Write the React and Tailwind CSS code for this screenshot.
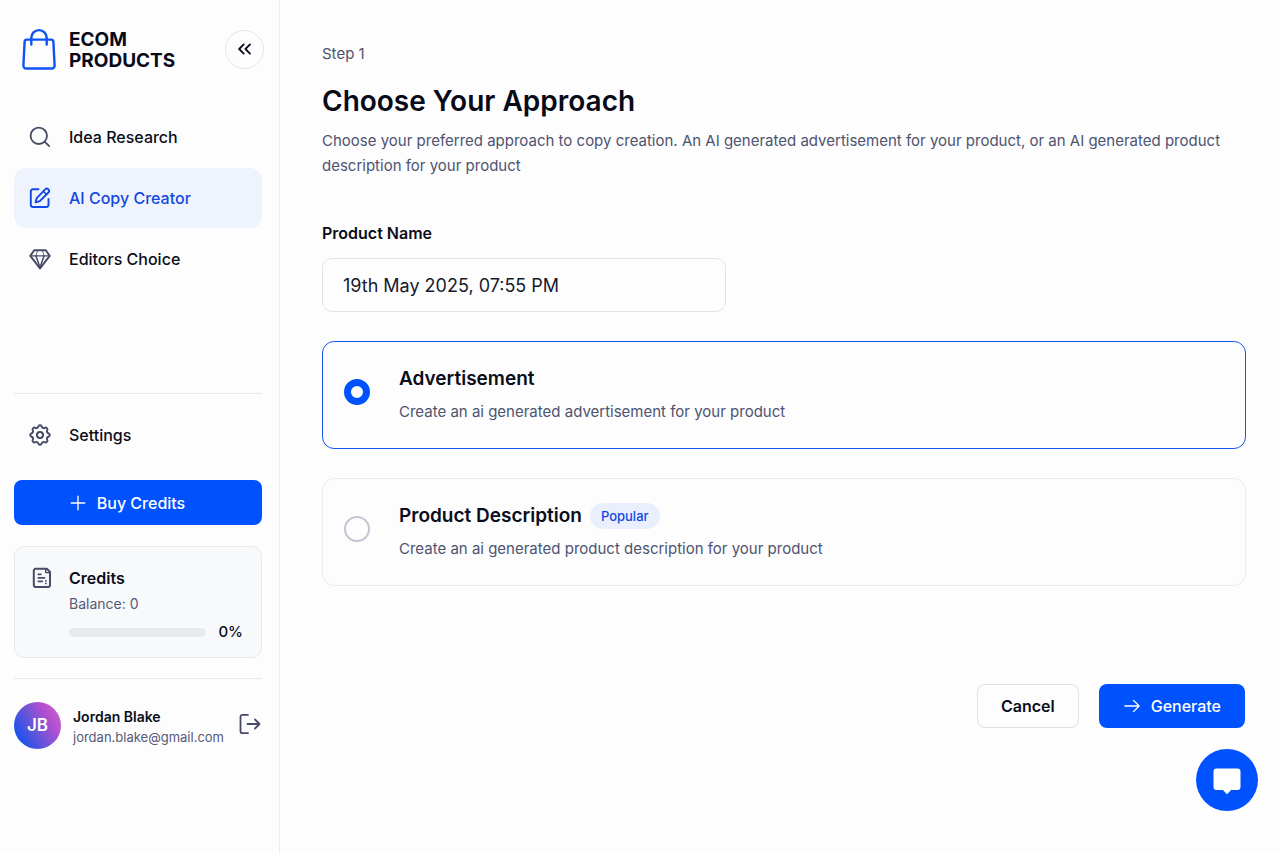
import { useState } from "react";

function Icon({ className = "size-6", width = 1.8, children }) {
  return (
    <svg
      viewBox="0 0 24 24"
      fill="none"
      stroke="currentColor"
      strokeWidth={width}
      strokeLinecap="round"
      strokeLinejoin="round"
      className={`shrink-0 ${className}`}
      aria-hidden="true"
    >
      {children}
    </svg>
  );
}

function BagLogo() {
  return (
    <svg viewBox="0 0 34 42" fill="none" stroke="#0f52f5" strokeWidth="2.4" strokeLinecap="round" strokeLinejoin="round" className="h-[42px] w-[34px] shrink-0" aria-hidden="true">
      <path d="M5 11.6h24a2.4 2.4 0 0 1 2.4 2.3l1.2 23.6a2.8 2.8 0 0 1-2.8 3H4.2a2.8 2.8 0 0 1-2.8-3l1.2-23.6A2.4 2.4 0 0 1 5 11.6z" />
      <path d="M9.3 16.6V9.8a7.7 7.7 0 0 1 15.4 0v6.8" />
    </svg>
  );
}

function SearchIcon() {
  return (
    <Icon>
      <circle cx="10.8" cy="10.8" r="8.2" />
      <path d="M16.8 16.8 21.2 21.2" />
    </Icon>
  );
}

function EditIcon() {
  return (
    <Icon width={1.9}>
      <path d="M10.5 3.3H5A2.2 2.2 0 0 0 2.8 5.5v13.3A2.2 2.2 0 0 0 5 21h13.3a2.2 2.2 0 0 0 2.2-2.2V13" />
      <path d="M17.2 3.3a2.2 2.2 0 0 1 3.2 3.2l-8.6 8.7-4.2 1.1 1.1-4.2z" />
      <path d="m15.3 5.3 3.1 3.1" strokeWidth="1.5" />
    </Icon>
  );
}

function DiamondIcon() {
  return (
    <Icon width={2}>
      <path d="M6.2 3.2h11.6l3.9 5.6L12 21.4 2.3 8.8z" />
      <path d="M2.6 8.9h18.8" strokeWidth="1.3" />
      <path d="M8 8.9 12 20.6 16 8.9" strokeWidth="1.5" />
      <path d="m9.5 3.5-1.5 5.4M14.5 3.5 16 8.9" strokeWidth="0.8" />
    </Icon>
  );
}

function GearIcon() {
  return (
    <Icon className="size-[26px] -mx-px">
      <path d="M10.325 4.317c.426-1.756 2.924-1.756 3.35 0a1.724 1.724 0 0 0 2.573 1.066c1.543-.94 3.31.826 2.37 2.37a1.724 1.724 0 0 0 1.065 2.572c1.756.426 1.756 2.924 0 3.35a1.724 1.724 0 0 0-1.066 2.573c.94 1.543-.826 3.31-2.37 2.37a1.724 1.724 0 0 0-2.572 1.065c-.426 1.756-2.924 1.756-3.35 0a1.724 1.724 0 0 0-2.573-1.066c-1.543.94-3.31-.826-2.37-2.37a1.724 1.724 0 0 0-1.065-2.572c-1.756-.426-1.756-2.924 0-3.35a1.724 1.724 0 0 0 1.066-2.573c-.94-1.543.826-3.31 2.37-2.37.996.608 2.296.07 2.572-1.065z" />
      <circle cx="12" cy="12" r="2.8" />
    </Icon>
  );
}

function ReceiptIcon() {
  return (
    <Icon width={2}>
      <path d="M5.8 2.8h11l3.2 3.2v13a2 2 0 0 1-2 2H5.8a2 2 0 0 1-2-2V4.8a2 2 0 0 1 2-2z" />
      <path d="M15.7 3.2v3.4h4" strokeWidth="1.4" />
      <path d="M8.3 8.3h2.6M8.3 11.8h6.2M8.3 15.3h4" strokeWidth="1.7" />
      <path d="M15.9 14.8v.1M15.9 17.3v.1" strokeWidth="1.7" />
    </Icon>
  );
}

function NavItem({ icon, label, active }) {
  return (
    <a
      href="#"
      aria-current={active ? "page" : undefined}
      className={`flex h-[60px] items-center gap-[17px] rounded-xl pl-[14px] text-[16px] font-medium ${
        active ? "bg-[#eff3fe] text-[#1249e0]" : "text-[#0b0d1a]"
      }`}
    >
      <span className={`flex ${active ? "" : "text-[#474b66]"}`}>{icon}</span>
      {label}
    </a>
  );
}

function Sidebar() {
  return (
    <aside className="flex w-[280px] shrink-0 flex-col border-r border-[#ebecf0] pt-[27px] pr-[17px] pl-[14px]">
      <div className="flex items-center pl-2">
        <BagLogo />
        <p className="ml-[13px] pt-0.5 text-[19px] leading-[21px] font-bold text-[#080a18]">
          ECOM
          <br />
          PRODUCTS
        </p>
        <button type="button" aria-label="Collapse sidebar" className="-mr-0.5 ml-auto flex size-[39px] items-center justify-center rounded-full border border-[#e4e5ea] text-[#0b0d1a]">
          <Icon className="size-5" width={2.2}>
            <path d="m10.500 17.500-5.500-5.500 5.500-5.500M18 17.500 12.500 12 18 6.500" />
          </Icon>
        </button>
      </div>

      <nav className="mt-9 flex flex-col gap-px">
        <NavItem icon={<SearchIcon />} label="Idea Research" />
        <NavItem icon={<EditIcon />} label="AI Copy Creator" active />
        <NavItem icon={<DiamondIcon />} label="Editors Choice" />
      </nav>

      <div className="mt-[104px] border-t border-[#e8e9ed] pt-[11px]">
        <NavItem icon={<GearIcon />} label="Settings" />
      </div>

      <button type="button" className="mt-[15px] flex h-[45px] items-center justify-center gap-2.5 rounded-lg bg-[#0052ff] pr-[22px] text-[16px] font-medium text-white">
        <Icon className="size-[18px]" width={1.8}>
          <path d="M12 3v18M3 12h18" />
        </Icon>
        Buy Credits
      </button>

      <section className="mt-[21px] flex gap-[15px] rounded-[10px] border border-[#e6e8ec] bg-[#f8f9fb] pt-[19px] pr-[18px] pb-[14px] pl-[15px]">
        <span className="text-[#474b66]">
          <ReceiptIcon />
        </span>
        <div className="grow">
          <h2 className="text-[16px] leading-6 font-semibold text-[#0b0d1a]">Credits</h2>
          <p className="mt-[3px] text-[14px] leading-[22px] text-[#555a78]">Balance: 0</p>
          <div className="mt-1.5 flex items-center gap-3">
            <div role="progressbar" aria-label="Credits used" aria-valuenow={0} aria-valuemin={0} aria-valuemax={100} className="h-[9px] grow rounded-full bg-[#e9eaef]" />
            <span className="text-[15px] leading-[22px] font-medium text-[#0b0d1a]">0%</span>
          </div>
        </div>
      </section>

      <div className="mt-5 flex items-center border-t border-[#e8e9ed] pt-[23px]">
        <span className="flex size-[47px] shrink-0 items-center justify-center rounded-full bg-[linear-gradient(60deg,#1150f0_10%,#6a55d8_45%,#b04fd0_70%,#d062c8_95%)] text-[17px] font-semibold text-white">
          JB
        </span>
        <div className="mt-[3px] ml-3 min-w-0">
          <p className="text-[14px] leading-5 font-semibold text-[#0b0d1a]">Jordan Blake</p>
          <p className="text-[13px] leading-5 text-[#555a78]">jordan.blake@gmail.com</p>
        </div>
        <button type="button" aria-label="Log out" className="mb-[3px] ml-auto text-[#474b66]">
          <Icon>
            <path d="M10 2.8H4.500a2 2 0 0 0-2 2v14.400a2 2 0 0 0 2 2H10" />
            <path d="M9.500 12h12M17 7.500l4.500 4.500-4.500 4.500" />
          </Icon>
        </button>
      </div>
    </aside>
  );
}

function Option({ value, title, text, badge, selected, onSelect }) {
  return (
    <label
      className={`flex cursor-pointer items-start rounded-xl border pt-[23px] pr-6 pb-6 pl-[21px] ${
        selected ? "border-[#1457ee]" : "border-[#ebecf0]"
      }`}
    >
      <input
        type="radio"
        name="approach"
        value={value}
        checked={selected}
        onChange={onSelect}
        className="mt-[14px] size-[26px] shrink-0 appearance-none rounded-full border-2 border-[#c3c6d2] checked:border-[7px] checked:border-[#0052ff] checked:bg-white"
      />
      <span className="ml-[29px]">
        <span className="flex h-7 items-center gap-2 text-[19px] font-semibold text-[#0b0d1a]">
          {title}
          {badge && (
            <span className="rounded-full bg-[#e9effd] px-[11px] text-[13px] leading-[26px] font-medium text-[#1249e0]">{badge}</span>
          )}
        </span>
        <span className="mt-[7px] block text-[15px] leading-6 text-[#4e536f]">{text}</span>
      </span>
    </label>
  );
}

export default function App() {
  const [approach, setApproach] = useState("ad");
  const [name, setName] = useState("19th May 2025, 07:55 PM");

  return (
    <div className="flex min-h-screen bg-[#fdfdfe] font-['Inter',sans-serif]">
      <Sidebar />

      <main className="min-w-0 grow pt-[42px] pr-[34px] pb-10 pl-[42px]">
        <p className="text-[15px] leading-6 text-[#4e536f]">Step 1</p>
        <h1 className="mt-[15px] text-[28px] leading-10 font-semibold text-[#080a18]">Choose Your Approach</h1>
        <p className="mt-[7px] text-[15px] leading-[25px] text-[#4e536f]">
          Choose your preferred approach to copy creation. An AI generated advertisement for your product, or an AI generated product description for your product
        </p>

        <form onSubmit={(e) => e.preventDefault()}>
          <label htmlFor="product-name" className="mt-[43px] block text-[16px] leading-6 font-semibold text-[#0b0d1a]">
            Product Name
          </label>
          <input
            id="product-name"
            type="text"
            value={name}
            onChange={(e) => setName(e.target.value)}
            className="mt-[13px] block h-[54px] w-full max-w-[404px] rounded-[10px] border border-[#e2e3e8] bg-transparent px-5 text-[18px] text-[#161a2e]"
          />

          <div className="mt-[29px] flex flex-col gap-[29px]">
            <Option value="ad" title="Advertisement" text="Create an ai generated advertisement for your product" selected={approach === "ad"} onSelect={() => setApproach("ad")} />
            <Option value="desc" title="Product Description" badge="Popular" text="Create an ai generated product description for your product" selected={approach === "desc"} onSelect={() => setApproach("desc")} />
          </div>

          <div className="mt-[98px] flex justify-end gap-5 pr-px">
            <button type="button" className="h-11 rounded-lg border border-[#e0e1e6] px-[23px] text-[16px] font-semibold text-[#0b0d1a]">
              Cancel
            </button>
            <button type="submit" className="flex h-11 items-center gap-2.5 rounded-lg bg-[#0052ff] px-6 text-[16px] font-medium text-white">
              <Icon className="size-[18px]" width={1.8}>
                <path d="M2.500 12h18.500M14 4.500l7.500 7.500-7.500 7.500" />
              </Icon>
              Generate
            </button>
          </div>
        </form>
      </main>

      <button type="button" aria-label="Open chat" className="fixed right-[22px] bottom-[42px] flex size-[62px] items-center justify-center rounded-full bg-[#0052ff] text-white">
        <svg viewBox="0 0 28 28" fill="currentColor" className="size-7" aria-hidden="true">
          <path d="M3.500 2.500h21A3 3 0 0 1 27.500 5.500v15.500a3 3 0 0 1-3 3h-6.500l-3.200 3.600a1 1 0 0 1-1.600 0L10 24H3.500a3 3 0 0 1-3-3V5.500a3 3 0 0 1 3-3z" />
        </svg>
      </button>
    </div>
  );
}
